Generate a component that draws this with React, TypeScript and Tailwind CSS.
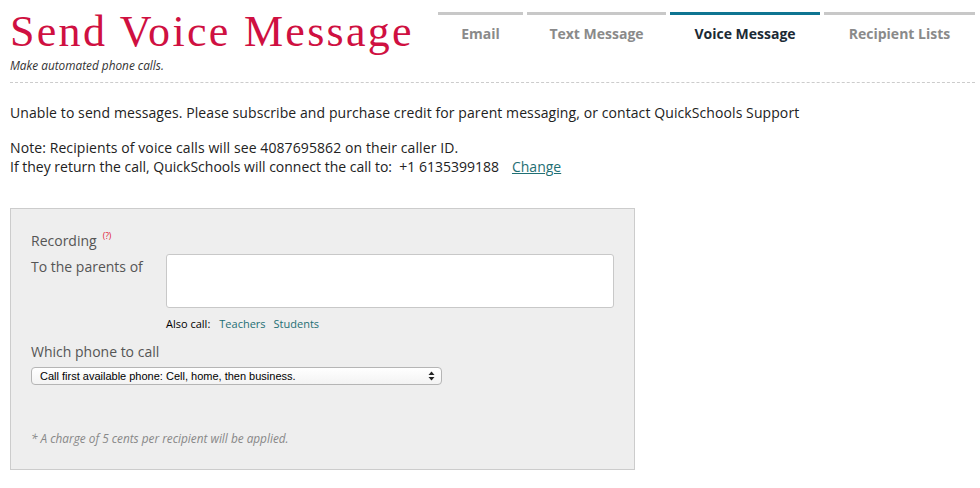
import React from 'react';

const tabs = [
  { label: 'Email', width: 'w-[85px]', active: false },
  { label: 'Text Message', width: 'w-[139px]', active: false },
  { label: 'Voice Message', width: 'w-[150px]', active: true },
  { label: 'Recipient Lists', width: 'w-[151px]', active: false },
];

function SelectArrows() {
  return (
    <svg width="7" height="10" viewBox="0 0 7 10" className="shrink-0">
      <path d="M3.5 0.5 L6.5 4 L0.5 4 Z" fill="#222" />
      <path d="M3.5 9.5 L6.5 6 L0.5 6 Z" fill="#222" />
    </svg>
  );
}

export default function App() {
  return (
    <div className="w-[980px] h-[488px] overflow-hidden bg-white font-['Open_Sans',sans-serif] text-[#222]">
      <div className="pl-[10px] pr-[5px]">
        <div className="flex justify-between h-[83px] border-b border-dashed border-[#cccccc]">
          <div className="pt-[10px]">
            <h1 className="font-['Liberation_Serif',serif] text-[44px] leading-none text-[#cf1041] tracking-[2.3px]">
              Send Voice Message
            </h1>
            <p className="mt-[4px] text-[11.8px] leading-[14px] italic text-[#333]">Make automated phone calls.</p>
          </div>
          <div className="flex gap-1 pt-[12px]">
            {tabs.map((t) => (
              <div
                key={t.label}
                className={`${t.width} border-t-[3px] pt-[9px] text-center text-[14px] font-bold leading-[20px] ${
                  t.active ? 'border-[#0e7592] text-[#1b2a35]' : 'border-[#c8c8c8] text-[#8a8a8a]'
                }`}
              >
                {t.label}
              </div>
            ))}
          </div>
        </div>

        <div className="mt-[20px] text-[14px] leading-[19px] tracking-[0.09px]">
          <p>
            Unable to send messages. Please subscribe and purchase credit for parent messaging, or contact QuickSchools
            Support
          </p>
          <p className="mt-4">Note: Recipients of voice calls will see 4087695862 on their caller ID.</p>
          <p className="tracking-normal">
            If they return the call, QuickSchools will connect the call to:&nbsp; +1 6135399188
            <a className="ml-[13px] text-[#1f6f74] underline">Change</a>
          </p>
        </div>

        <div className="mt-[32px] w-[625px] h-[262px] border border-[#cccccc] bg-[#eeeeee] pl-[20px] pt-[22px]">
          <div className="h-[19px] text-[14px] leading-[19px] text-[#555]">
            Recording
            <span className="relative top-[-7px] ml-[6px] text-[8.5px] leading-none text-[#e0142e]">(?)</span>
          </div>
          <div className="mt-[4px] flex">
            <div className="w-[135px] pt-[3px] text-[14px] leading-[19px] text-[#555]">To the parents of</div>
            <div>
              <div className="w-[448px] h-[54px] rounded-[3px] border border-[#c8c8c8] bg-white" />
              <div className="mt-[9px] flex text-[11px] leading-[14px]">
                <span className="text-black">Also call:</span>
                <a className="ml-[9px] text-[#1f6f74]">Teachers</a>
                <a className="ml-[8px] text-[#1f6f74]">Students</a>
              </div>
            </div>
          </div>
          <div className="mt-[11px] text-[14px] leading-[19px] text-[#555]">Which phone to call</div>
          <div className="mt-[6px] flex w-[411px] h-[18px] items-center justify-between rounded-[4px] border border-[#b5b5b5] bg-gradient-to-b from-white to-[#f3f3f3] pl-[8px] pr-[6px] font-['Liberation_Sans',sans-serif] text-[11px] text-black">
            <span>Call first available phone: Cell, home, then business.</span>
            <SelectArrows />
          </div>
          <p className="mt-[46px] text-[11.8px] leading-[14px] italic text-[#888]">
            * A charge of 5 cents per recipient will be applied.
          </p>
        </div>
      </div>
    </div>
  );
}
